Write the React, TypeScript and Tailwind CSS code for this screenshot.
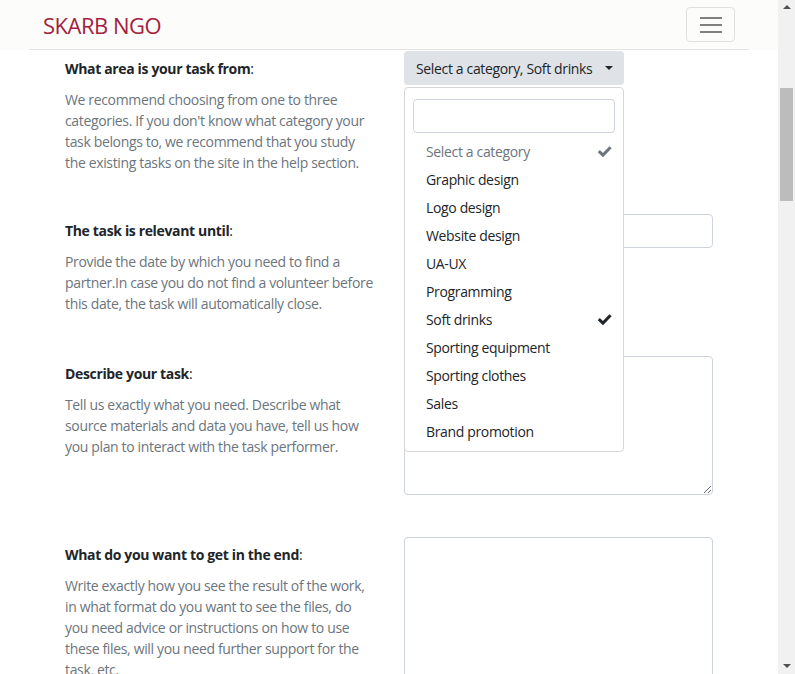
const font = { fontFamily: '"Open Sans", "Noto Sans", sans-serif' };

const categories = [
  "Select a category",
  "Graphic design",
  "Logo design",
  "Website design",
  "UA-UX",
  "Programming",
  "Soft drinks",
  "Sporting equipment",
  "Sporting clothes",
  "Sales",
  "Brand promotion",
];

const Check = ({ className }: { className: string }) => (
  <svg viewBox="0 0 16 16" className={className} fill="currentColor">
    <path d="M13.3 2.4 15.6 4.6 6.4 14 0.8 8.7 3 6.5 6.3 9.6z" />
  </svg>
);

const Label = ({ text }: { text: string }) => (
  <p className="text-[14px] leading-[21px] tracking-[-0.35px] text-[#212529]">
    <b className="font-bold">{text}</b>:
  </p>
);

const Desc = ({ children }: { children: React.ReactNode }) => (
  <p className="mt-[10px] text-[14px] leading-[21px] tracking-[-0.35px] text-[#6c757d]">{children}</p>
);

const CategoryDropdown = () => (
  <div className="relative">
    <button className="flex h-[34px] w-[220px] items-center rounded-[4px] bg-[#dfe3e7] pl-[12px] pr-[11px] text-[14px] tracking-[-0.35px] text-[#212529]">
      <span className="flex-1 whitespace-nowrap text-left">Select a category, Soft drinks</span>
      <span className="ml-[8px] h-0 w-0 border-x-[4px] border-t-[4px] border-x-transparent border-t-[#212529]" />
    </button>
    <div className="absolute left-0 top-[36px] z-10 w-[220px] rounded-[4px] border border-[#d6d6d6] bg-white pb-[6px] pt-[11px]">
      <div className="mx-[8px] h-[34px] rounded-[4px] border border-[#ced4da] bg-white" />
      <ul className="mt-[4px]">
        {categories.map((c, i) => (
          <li
            key={c}
            className={`flex h-[28px] items-center pl-[21px] pr-[11px] text-[14px] tracking-[-0.35px] ${
              i === 0 ? "text-[#6c757d]" : "text-[#212529]"
            }`}
          >
            <span className="flex-1">{c}</span>
            {i === 0 && <Check className="h-[15px] w-[15px] text-[#6c757d]" />}
            {i === 6 && <Check className="h-[15px] w-[15px] text-[#212529]" />}
          </li>
        ))}
      </ul>
    </div>
  </div>
);

const Scrollbar = () => (
  <div className="flex w-[17px] flex-col items-center bg-[#f1f1f1]">
    <div className="mt-[5px] h-0 w-0 border-x-[4px] border-b-[4px] border-x-transparent border-b-[#505050]" />
    <div className="mt-[79px] h-[113px] w-[13px] bg-[#bcbcbc]" />
    <div className="flex-1" />
    <div className="mb-[6px] h-0 w-0 border-x-[4px] border-t-[4px] border-x-transparent border-t-[#505050]" />
  </div>
);

export default function App() {
  return (
    <div className="flex h-[674px] overflow-hidden bg-white" style={font}>
      <div className="flex-1">
        <header className="bg-[#fcfcfa]">
          <div className="ml-[29px] flex h-[50px] w-[720px] items-center justify-between border-b border-[#e3e3e3] px-[14px]">
            <span className="text-[22px] leading-none tracking-[-0.5px] text-[#a4203e]">SKARB NGO</span>
            <button className="flex h-[35px] w-[49px] flex-col items-center justify-center gap-[5px] rounded-[4px] border border-[#e0e0e0]">
              <span className="h-[2px] w-[22px] bg-[#808080]" />
              <span className="h-[2px] w-[22px] bg-[#808080]" />
              <span className="h-[2px] w-[22px] bg-[#808080]" />
            </button>
          </div>
        </header>

        <main className="ml-[65px] w-[648px]">
          <section className="mt-[1px] grid grid-cols-[310px_309px] gap-x-[29px]">
            <div className="pt-[6.5px]">
              <Label text="What area is your task from" />
              <Desc>
                We recommend choosing from one to three categories. If you don't know what category your
                task belongs to, we recommend that you study the existing tasks on the site in the help
                section.
              </Desc>
            </div>
            <CategoryDropdown />
          </section>

          <section className="mt-[41px] grid grid-cols-[310px_309px] gap-x-[29px]">
            <div className="pt-[6.5px]">
              <Label text="The task is relevant until" />
              <Desc>
                Provide the date by which you need to find a partner.In case you do not find a volunteer
                before this date, the task will automatically close.
              </Desc>
            </div>
            <div>
              <input className="h-[34px] w-[309px] rounded-[4px] border border-[#ced4da] bg-white" />
            </div>
          </section>

          <section className="mt-[42px] grid grid-cols-[310px_309px] gap-x-[29px]">
            <div className="pt-[6.5px]">
              <Label text="Describe your task" />
              <Desc>
                Tell us exactly what you need. Describe what source materials and data you have, tell us
                how you plan to interact with the task performer.
              </Desc>
            </div>
            <div>
              <textarea className="block h-[139px] w-[309px] rounded-[4px] border border-[#ced4da] bg-white" />
            </div>
          </section>

          <section className="mt-[42px] grid grid-cols-[310px_309px] gap-x-[29px]">
            <div className="pt-[6.5px]">
              <Label text="What do you want to get in the end" />
              <Desc>
                Write exactly how you see the result of the work, in what format do you want to see the
                files, do you need advice or instructions on how to use these files, will you need further
                support for the task, etc.
              </Desc>
            </div>
            <div>
              <textarea className="block h-[160px] w-[309px] rounded-[4px] border border-[#ced4da] bg-white" />
            </div>
          </section>
        </main>
      </div>
      <Scrollbar />
    </div>
  );
}
